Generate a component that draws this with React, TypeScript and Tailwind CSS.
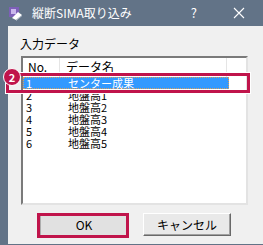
import React from 'react';

const rows = [
  { no: '1', name: 'センター成果' },
  { no: '2', name: '地盤高1' },
  { no: '3', name: '地盤高2' },
  { no: '4', name: '地盤高3' },
  { no: '5', name: '地盤高4' },
  { no: '6', name: '地盤高5' },
];

const font = { fontFamily: '"Noto Sans CJK JP", "Noto Sans", sans-serif' };

const AppIcon: React.FC = () => (
  <svg width="16" height="16" viewBox="0 0 16 16">
    <rect x="2" y="2" width="10" height="10" fill="#7d5fb8" />
    <rect x="4" y="4" width="5" height="5" fill="#c9b6ec" />
    <path d="M5 13 L11 7 L15 10 L9 15 Z" fill="#ffffff" />
    <path d="M9 15 L15 10 L15 11 L9 16 Z" fill="#b9c3d0" />
  </svg>
);

const App: React.FC = () => {
  return (
    <div className="relative w-[263px] h-[245px] bg-[#627387] flex flex-col overflow-hidden" style={font}>
      {/* Title bar */}
      <div className="h-[26px] flex items-center text-white shrink-0">
        <div className="ml-[7px] w-[16px] h-[16px]">
          <AppIcon />
        </div>
        <span className="ml-[9px] text-[12px] leading-[16px]">縦断SIMA取り込み</span>
        <span className="ml-auto mr-[36px] text-[13px] leading-[16px]">?</span>
        <svg className="mr-[18px]" width="12" height="12" viewBox="0 0 12 12">
          <path d="M1 1 L11 11 M11 1 L1 11" stroke="#ffffff" strokeWidth="1.1" />
        </svg>
      </div>

      {/* Client area */}
      <div className="flex-1 ml-[8px] mb-[1px] bg-[#f0f0f0] flex flex-col text-black">
        <div className="pl-[12px] pt-[10px] text-[12px] leading-[16px]">入力データ</div>

        <div className="ml-[13px] mt-[4px] w-[227px] h-[149px] bg-white border-2 border-t-[#7a7a7a] border-l-[#7a7a7a] border-r-[#e3e3e3] border-b-[#e3e3e3] flex flex-col">
          <div className="h-[19px] flex text-[12px] leading-[14px] shrink-0">
            <div className="w-[37px] pl-[5px] pt-[2px] border-r border-[#e5e5e5]">No.</div>
            <div className="w-[167px] pl-[6px] pt-[2px] border-r border-[#e5e5e5]">データ名</div>
          </div>
          <div className="flex flex-col text-[11px] leading-[12px]">
            {rows.map((r, i) => (
              <div
                key={r.no}
                className={
                  i === 0
                    ? 'h-[12px] w-[206px] flex items-center overflow-hidden bg-[#3399ff] text-white outline-1 outline-dotted outline-[#d9a05b] -outline-offset-1'
                    : 'h-[12px] w-[206px] flex items-center overflow-hidden'
                }
              >
                <span className="w-[45px] pl-[3px] leading-[12px]">{r.no}</span>
                <span className="leading-[12px]">{r.name}</span>
              </div>
            ))}
          </div>
        </div>

        <div className="mt-[8px] flex justify-center gap-[15px] text-[12px] font-normal">
          <button className="w-[88px] h-[23px] bg-[#e1e1e1] border border-[#adadad] leading-[16px] font-normal">OK</button>
          <button className="w-[88px] h-[23px] bg-[#e9e9e9] border border-t-white border-l-white border-r-[#696969] border-b-[#696969] shadow-[inset_-1px_-1px_0_#a0a0a0] leading-[16px] font-normal">
            キャンセル
          </button>
        </div>
      </div>

      {/* Callout highlights */}
      <div className="absolute left-[6px] top-[73px] w-[244px] h-[20px] border-[3px] border-[#c0144b] shadow-[0_0_0_1px_#ffffff] pointer-events-none" />
      <div className="absolute left-[37px] top-[213px] w-[92px] h-[25px] border-[3px] border-[#c0144b] pointer-events-none" />
      <div className="absolute left-[3px] top-[68px] w-[18px] h-[18px] rounded-full bg-[#c0144b] border-[1.5px] border-white flex items-center justify-center text-white text-[11px] font-bold leading-none">
        2
      </div>
    </div>
  );
};

export default App;
